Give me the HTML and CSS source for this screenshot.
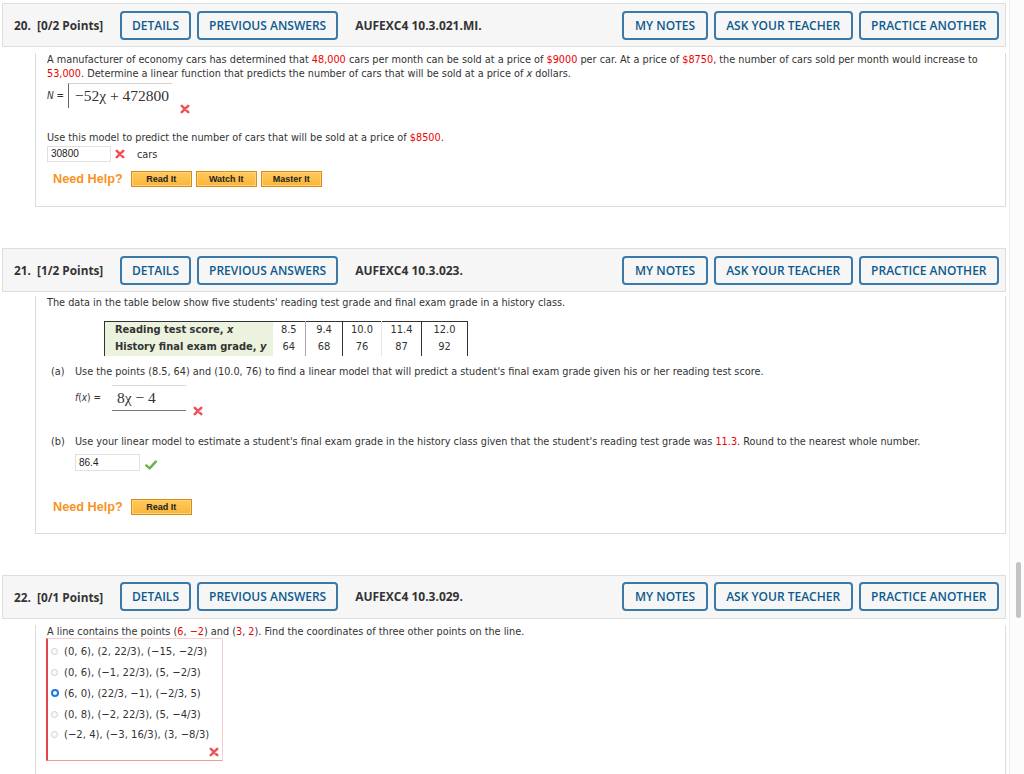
FILE: index.html
```html
<!DOCTYPE html>
<html lang="en">
<head>
<meta charset="utf-8">
<title>Questions</title>
<link rel="stylesheet" href="styles.css">
</head>
<body>
<div class="page">

  <section class="q">
    <header class="q-head">
      <span class="q-num">20.&nbsp; [0/2 Points]</span>
      <button class="btn">DETAILS</button>
      <button class="btn">PREVIOUS ANSWERS</button>
      <span class="q-code">AUFEXC4 10.3.021.MI.</span>
      <div class="head-right">
        <button class="btn">MY NOTES</button>
        <button class="btn">ASK YOUR TEACHER</button>
        <button class="btn">PRACTICE ANOTHER</button>
      </div>
    </header>
    <div class="q-body b1">
      <p class="txt first1">A manufacturer of economy cars has determined that <span class="red">48,000</span> cars per month can be sold at a price of <span class="red">$9000</span> per car. At a price of <span class="red">$8750</span>, the number of cars sold per month would increase to<br><span class="red">53,000</span>. Determine a linear function that predicts the number of cars that will be sold at a price of <i>x</i> dollars.</p>
      <div class="ans ans1">
        <span class="lbl"><i>N</i> =</span>
        <span class="mbox mbox1">−52χ + 472800</span>
        <svg class="xmark xm1" viewBox="0 0 10 10"><path d="M1.8 1.8 L8.2 8.2 M8.2 1.8 L1.8 8.2"/></svg>
      </div>
      <p class="txt gap22">Use this model to predict the number of cars that will be sold at a price of <span class="red">$8500</span>.</p>
      <div class="inrow">
        <span class="inp">30800</span>
        <svg class="xmark xm2" viewBox="0 0 10 10"><path d="M1.8 1.8 L8.2 8.2 M8.2 1.8 L1.8 8.2"/></svg>
        <span class="unit">cars</span>
      </div>
      <div class="help h1">
        <span class="help-t">Need Help?</span>
        <span class="hb">Read It</span>
        <span class="hb">Watch It</span>
        <span class="hb">Master It</span>
      </div>
    </div>
  </section>

  <section class="q">
    <header class="q-head">
      <span class="q-num">21.&nbsp; [1/2 Points]</span>
      <button class="btn">DETAILS</button>
      <button class="btn">PREVIOUS ANSWERS</button>
      <span class="q-code">AUFEXC4 10.3.023.</span>
      <div class="head-right">
        <button class="btn">MY NOTES</button>
        <button class="btn">ASK YOUR TEACHER</button>
        <button class="btn">PRACTICE ANOTHER</button>
      </div>
    </header>
    <div class="q-body b2">
      <p class="txt first2">The data in the table below show five students' reading test grade and final exam grade in a history class.</p>
      <table class="dt">
        <tr>
          <td class="h">Reading test score, <i>x</i></td>
          <td class="c1">8.5</td><td class="c2">9.4</td><td class="c3">10.0</td><td class="c4">11.4</td><td class="c5">12.0</td>
        </tr>
        <tr>
          <td class="h">History final exam grade, <i>y</i></td>
          <td class="c1">64</td><td class="c2">68</td><td class="c3">76</td><td class="c4">87</td><td class="c5">92</td>
        </tr>
      </table>
      <p class="txt part pa">
        <span class="pl">(a)</span><span>Use the points (8.5, 64) and (10.0, 76) to find a linear model that will predict a student's final exam grade given his or her reading test score.</span>
      </p>
      <div class="ans ans2">
        <span class="lbl lbl2"><i>f</i>(<i>x</i>) =</span>
        <span class="mbox mbox2">8χ − 4</span>
        <svg class="xmark xm3" viewBox="0 0 10 10"><path d="M1.8 1.8 L8.2 8.2 M8.2 1.8 L1.8 8.2"/></svg>
      </div>
      <p class="txt part pb">
        <span class="pl">(b)</span><span>Use your linear model to estimate a student's final exam grade in the history class given that the student's reading test grade was <span class="red">11.3</span>. Round to the nearest whole number.</span>
      </p>
      <div class="inrow inrow2">
        <span class="inp inp2">86.4</span>
        <svg class="check" viewBox="0 0 12 10"><path d="M1.3 5.4 L4.6 8.4 L10.8 1.6"/></svg>
      </div>
      <div class="help h2">
        <span class="help-t">Need Help?</span>
        <span class="hb">Read It</span>
      </div>
    </div>
  </section>

  <section class="q">
    <header class="q-head">
      <span class="q-num">22.&nbsp; [0/1 Points]</span>
      <button class="btn">DETAILS</button>
      <button class="btn">PREVIOUS ANSWERS</button>
      <span class="q-code">AUFEXC4 10.3.029.</span>
      <div class="head-right">
        <button class="btn">MY NOTES</button>
        <button class="btn">ASK YOUR TEACHER</button>
        <button class="btn">PRACTICE ANOTHER</button>
      </div>
    </header>
    <div class="q-body b3">
      <p class="txt first3">A line contains the points (<span class="red">6</span>, <span class="red">−2</span>) and (<span class="red">3</span>, <span class="red">2</span>). Find the coordinates of three other points on the line.</p>
      <div class="opts">
        <label class="opt"><span class="radio"></span>(0, 6), (2, 22/3), (−15, −2/3)</label>
        <label class="opt"><span class="radio"></span>(0, 6), (−1, 22/3), (5, −2/3)</label>
        <label class="opt"><span class="radio on"></span>(6, 0), (22/3, −1), (−2/3, 5)</label>
        <label class="opt"><span class="radio"></span>(0, 8), (−2, 22/3), (5, −4/3)</label>
        <label class="opt"><span class="radio"></span>(−2, 4), (−3, 16/3), (3, −8/3)</label>
        <div class="opt-x">
          <svg class="xmark" viewBox="0 0 10 10"><path d="M1.8 1.8 L8.2 8.2 M8.2 1.8 L1.8 8.2"/></svg>
        </div>
      </div>
    </div>
  </section>

</div>
<div class="scroll"><div class="thumb"></div></div>
</body>
</html>
```

FILE: styles.css
```css
* { box-sizing: border-box; }

body {
  margin: 0;
  background: #fff;
  font-family: "DejaVu Sans Condensed", "DejaVu Sans", sans-serif;
  font-stretch: condensed;
  font-size: 10.8px;
  color: #333;
}

.page {
  width: 1006px;
  padding: 3px 0 0 2px;
}

.q + .q { margin-top: 41px; }

/* header bar */
.q-head {
  height: 44px;
  display: flex;
  align-items: center;
  background: #f6f6f6;
  border: 1px solid #dedede;
  padding: 0 6px 0 11px;
  font-family: "Open Sans", sans-serif;
  font-stretch: normal;
}

.q-num {
  flex: none;
  width: 106px;
  font-weight: 700;
  font-size: 11.8px;
  color: #333;
}

.btn {
  flex: none;
  height: 29px;
  margin: 0 6px 0 0;
  padding: 0 10px;
  border: 2px solid #3a79a8;
  border-radius: 4px;
  background: transparent;
  font-family: "Open Sans", sans-serif;
  font-weight: 600;
  font-size: 12px;
  color: #0c5a8e;
  cursor: pointer;
}

.q-code {
  margin-left: 11px;
  font-weight: 700;
  font-size: 12px;
  color: #333;
}

.head-right {
  margin-left: auto;
  display: flex;
}
.head-right .btn { padding: 0 10.5px; }
.head-right .btn:last-child { margin-right: 0; }

/* body */
.q-body {
  margin-left: 33px;
  border-left: 1px solid #dcdcdc;
  border-right: 1px solid #dcdcdc;
  border-bottom: 1px solid #dcdcdc;
  padding: 0 12px 18px 11px;
}
.b1 { padding-bottom: 19px; }
.b3 { border-bottom: none; padding-bottom: 30px; }

.txt {
  margin: 0;
  line-height: 14px;
  white-space: nowrap;
}
.first1 { margin-top: 6px; }
.first2 { margin-top: 4px; }
.first3 { margin-top: 6px; }
.gap22 { margin-top: 23px; }

.red { color: #ee0000; }

/* answer boxes */
.ans {
  display: flex;
  align-items: center;
}
.ans1 { margin-top: 2px; }
.ans2 { margin-top: 6px; padding-left: 28px; }

.lbl {
  font-size: 10px;
  margin-right: 4px;
  width: 17px;
  white-space: nowrap;
}
.lbl2 { width: 33px; }

.mbox {
  display: flex;
  align-items: center;
  font-family: "Liberation Serif", "Times New Roman", serif;
  font-stretch: normal;
  font-size: 15.5px;
  color: #333;
  white-space: nowrap;
}
.mbox1 {
  width: 104px;
  height: 25px;
  border-top: 1px solid #d4d4d4;
  border-left: 1px solid #666;
  padding-left: 6px;
}
.mbox2 {
  width: 74px;
  height: 26px;
  border-top: 1px solid #dadada;
  border-bottom: 1px solid #777;
  padding-left: 5px;
}

.xmark {
  flex: none;
  width: 10px;
  height: 10px;
  fill: none;
  stroke: #ee535a;
  stroke-width: 2.6;
  stroke-linecap: round;
}
.xm1 { align-self: flex-end; margin: 0 0 -6px 8px; }
.xm3 { align-self: flex-end; margin: 0 0 -5px 7px; }
.xm2 { margin-left: 4px; }

.inrow {
  display: flex;
  align-items: center;
  margin-top: 1px;
}
.inp {
  width: 64px;
  height: 16px;
  border: 1px solid #e0e0e0;
  background: #fff;
  padding-left: 3px;
  font-family: "Liberation Sans", sans-serif;
  font-stretch: normal;
  font-size: 10px;
  line-height: 14px;
  color: #222;
}
.unit { margin-left: 12px; }

.inrow2 {
  margin-top: 5px;
  padding-left: 28px;
  align-items: flex-end;
}
.inp2 { width: 65px; height: 17px; line-height: 15px; }

.check {
  width: 12px;
  height: 10px;
  margin: 0 0 1px 5px;
  fill: none;
  stroke: #67b249;
  stroke-width: 2.4;
  stroke-linecap: round;
  stroke-linejoin: round;
}

/* need help */
.help {
  display: flex;
  align-items: center;
  padding-left: 6px;
  margin-top: 9px;
}
.h2 { margin-top: 28px; }

.help-t {
  font-family: "Liberation Sans", sans-serif;
  font-stretch: normal;
  font-weight: 700;
  font-size: 12.7px;
  color: #f7931e;
  margin-right: 8px;
}
.hb {
  width: 61px;
  height: 16px;
  margin-right: 4px;
  border: 1px solid #df8a16;
  background: linear-gradient(#fecb5a, #fbb43a);
  box-shadow: inset 0 0 0 1px #fdd27a;
  font-family: "Liberation Sans", sans-serif;
  font-stretch: normal;
  font-weight: 700;
  font-size: 9px;
  line-height: 14px;
  color: #222;
  text-align: center;
}

/* table */
.dt {
  margin: 11px 0 0 57px;
  border-collapse: collapse;
  border-top: 1px solid #333;
  border-left: 1px solid #333;
  border-right: 1px solid #333;
  font-size: 11px;
}
.dt td {
  height: 17px;
  padding: 0;
  line-height: 16px;
  text-align: center;
}
.dt td.h {
  width: 168px;
  padding-left: 10px;
  text-align: left;
  font-weight: 700;
  background: #ebf2dd;
}
.dt .c1 { width: 33px; }
.dt .c2 { width: 37px; border-left: 1px solid #aaa; }
.dt .c3 { width: 39px; border-left: 1px solid #333; }
.dt .c4 { width: 40px; border-left: 1px solid #e6e6e6; }
.dt .c5 { width: 46px; border-left: 1px solid #333; }

/* part labels */
.part {
  display: flex;
  padding-left: 4px;
}
.pa { margin-top: 9px; }
.pb { margin-top: 24px; }
.pl { width: 24px; flex: none; }

/* options */
.opts {
  width: 177px;
  margin: -1px 0 0 -1px;
  border: 1px solid #f7cfcf;
  border-left: 2px solid #e6444b;
  border-bottom-color: #f09c9c;
  padding: 3px 3px 3px 3px;
  font-size: 11.2px;
}
.opt {
  display: flex;
  align-items: center;
  height: 20.75px;
  white-space: nowrap;
}
.radio {
  flex: none;
  width: 7px;
  height: 7px;
  margin-right: 6px;
  border: 1px solid #cfcfcf;
  border-radius: 50%;
  background: #fafafa;
}
.radio.on {
  width: 8px;
  height: 8px;
  margin-right: 5px;
  border: 2.5px solid #1c78e4;
  background: #fff;
}
.opt-x {
  display: flex;
  justify-content: flex-end;
  margin-top: 2px;
}

/* overlay scrollbar */
.scroll {
  position: fixed;
  top: 0;
  right: 0;
  width: 15px;
  height: 774px;
  background: #fcfcfc;
  border-left: 1px solid #efefef;
}
.thumb {
  position: absolute;
  left: 6px;
  top: 562px;
  width: 5px;
  height: 56px;
  border-radius: 3px;
  background: #c3c3c3;
}
```
